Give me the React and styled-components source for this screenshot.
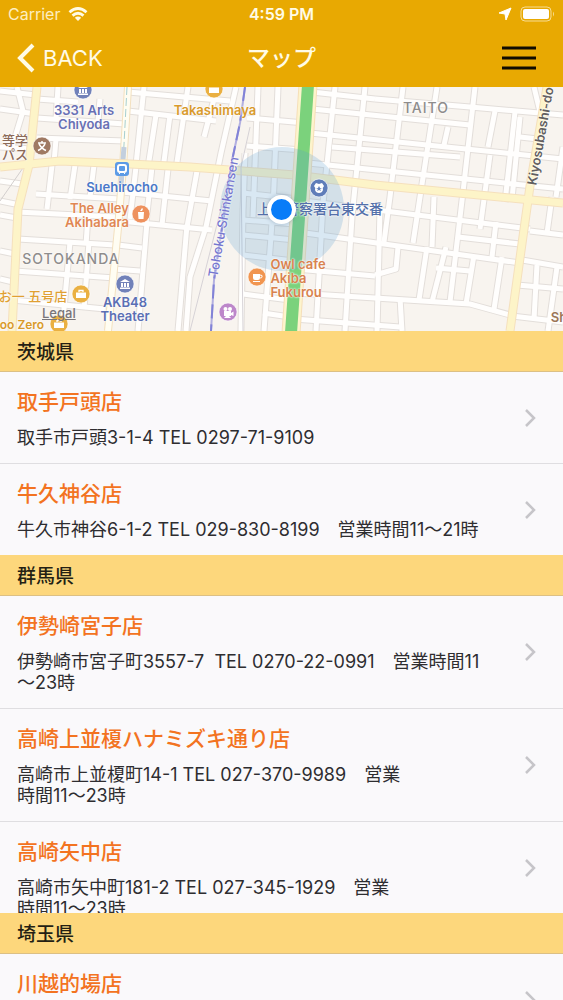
import React from 'react'
import styled, { createGlobalStyle } from 'styled-components'

const GlobalStyle = createGlobalStyle`
  * {
    box-sizing: border-box;
  }

  body {
    margin: 0;
    background: #faf9fb;
    font-family: Inter, "Noto Sans CJK JP", sans-serif;
    color: #2e2d30;
  }
`

const Screen = styled.div`
  height: 100vh;
  overflow: hidden;
  display: flex;
  flex-direction: column;
`

const TopBar = styled.header`
  flex: none;
  background: #e8a902;
  color: #fffbe6;
`

const StatusBar = styled.div`
  display: grid;
  grid-template-columns: 1fr auto 1fr;
  align-items: center;
  height: 28px;
  padding: 0 8px;
  font-size: 16px;
  line-height: 20px;
`

const Carrier = styled.div`
  display: flex;
  align-items: center;
  gap: 8px;
  color: #fdeec0;
`

const Clock = styled.div`
  font-weight: 600;
`

const StatusIcons = styled.div`
  display: flex;
  justify-content: flex-end;
  align-items: center;
  gap: 8px;
`

const NavBar = styled.nav`
  display: grid;
  grid-template-columns: 1fr auto 1fr;
  align-items: center;
  height: 59px;
  padding: 0 26px 0 16px;
`

const NavButton = styled.button`
  display: flex;
  align-items: center;
  gap: 8px;
  justify-self: ${props => props.$end ? 'end' : 'start'};
  padding: 0;
  border: 0;
  background: none;
  color: inherit;
  font: inherit;
  font-size: 22px;
  line-height: 28px;
`

const PageTitle = styled.h1`
  margin: 0;
  padding-left: 10px;
  font-size: 23px;
  line-height: 28px;
  font-weight: 500;
`

const MapArea = styled.section`
  flex: none;
  position: relative;
  height: 244px;
  overflow: hidden;
  background: #f8f4ef;
`

const MapCanvas = styled.svg`
  display: block;
  width: 100%;
  height: 100%;
`

const MapLabel = styled.span`
  position: absolute;
  left: ${props => props.$x}px;
  top: ${props => props.$y}px;
  transform: translate(-50%, -50%) rotate(${props => props.$turn || 0}deg);
  color: ${props => props.$color};
  font-size: ${props => props.$size || 13}px;
  line-height: 14px;
  font-weight: ${props => props.$weight || 600};
  letter-spacing: ${props => props.$spaced ? '1px' : 'normal'};
  text-align: ${props => props.$align || 'center'};
  white-space: pre;
  text-shadow: 0 0 2px #fff, 0 0 2px #fff;
`

const LegalLink = styled.a`
  position: absolute;
  left: 42px;
  top: 218px;
  color: #78757a;
  font-size: 13px;
  line-height: 16px;
  font-weight: 500;
`

const CurrentLocation = styled.span`
  position: absolute;
  left: 267px;
  top: 108px;
  width: 29px;
  height: 29px;
  border: 4px solid #fff;
  border-radius: 50%;
  background: #087cf8;
  box-shadow: 0 0 4px rgba(60, 90, 120, .35);
`

const StoreList = styled.main`
  flex: 1;
  min-height: 0;
  overflow: hidden;
`

const Prefecture = styled.h2`
  height: 41px;
  margin: 0;
  padding: 0 17px;
  border-bottom: 1px solid #dcc084;
  background: #fdd77c;
  color: #241f14;
  font-size: 19px;
  line-height: 43px;
  font-weight: 500;
`

const Stores = styled.ul`
  margin: 0;
  padding: 0;
  list-style: none;
`

const StoreItem = styled.li`
  border-bottom: 1px solid #dfdee1;

  &:last-child {
    border-bottom: 0;
  }
`

const StoreLink = styled.a`
  display: flex;
  align-items: center;
  justify-content: space-between;
  height: ${props => props.$short ? '91px' : 'auto'};
  overflow: hidden;
  padding: 0 27px 0 17px;
  color: inherit;
  text-decoration: none;
`

const StoreText = styled.div`
  align-self: flex-start;
  padding: 17px 0 15px;
`

const StoreName = styled.h3`
  margin: 0 0 12px;
  color: #f37321;
  font-size: 21px;
  line-height: 26px;
  font-weight: 500;
`

const StoreInfo = styled.p`
  margin: 0;
  font-size: 18px;
  line-height: 21px;
  white-space: pre;
`

const sections = [
  {
    name: '茨城県',
    stores: [
      { name: '取手戸頭店', info: '取手市戸頭3-1-4 TEL 0297-71-9109' },
      { name: '牛久神谷店', info: '牛久市神谷6-1-2 TEL 029-830-8199　営業時間11〜21時' }
    ]
  },
  {
    name: '群馬県',
    stores: [
      { name: '伊勢崎宮子店', info: '伊勢崎市宮子町3557-7  TEL 0270-22-0991　営業時間11\n〜23時' },
      { name: '高崎上並榎ハナミズキ通り店', info: '高崎市上並榎町14-1 TEL 027-370-9989　営業\n時間11〜23時' },
      { name: '高崎矢中店', info: '高崎市矢中町181-2 TEL 027-345-1929　営業\n時間11〜23時', short: true }
    ]
  },
  {
    name: '埼玉県',
    stores: [
      { name: '川越的場店', info: '川越市的場' }
    ]
  }
]

// side streets, drawn as a grey outline with white on top
const streets = [
  // west
  'M0 22L36 27', 'M17 0L23 24L12 60', 'M0 4L36 8', 'M37 31L125 37', 'M37 51L125 54', 'M0 60L32 62',
  'M58 0L56 32', 'M100 12L98 34', 'M37 12L78 15', 'M56 52L54 76',
  'M52 78L47 122', 'M75 78L70 112', 'M94 78L90 110', 'M36 107L120 112', 'M0 94L22 97', 'M0 114L20 118',
  'M17 125L118 130', 'M18 152L115 158', 'M15 184L115 191', 'M12 213L105 222',
  'M70 155L62 244', 'M89 155L84 222', 'M88 128L86 158', 'M0 164L15 167', 'M0 192L13 195', 'M0 128L17 131',
  // between the station and the railway
  'M128 24L216 34', 'M144 0L136 78', 'M156 28L148 80', 'M170 28L163 82', 'M188 0L176 82',
  'M214 12L204 50', 'M128 5L230 14', 'M136 80L130 132', 'M152 80L146 136', 'M168 82L162 138',
  'M122 105L212 114', 'M120 134L212 143', 'M118 158L142 161', 'M113 182L140 184', 'M147 135L138 244',
  'M187 138L178 244', 'M197 84L187 140',
  'M236 0L221 66L206 140L190 190L186 244', 'M245 66L243 124L241 244',
  // either side of the avenue
  'M258 0L253 130', 'M278 0L273 122L264 244', 'M247 31L305 36', 'M247 59L303 63',
  'M243 106L298 112', 'M243 133L295 137', 'M243 148L295 153', 'M243 168L294 174', 'M243 207L290 213',
  'M263 226L290 230', 'M335 0L323 116L316 244', 'M365 0L352 130L345 244',
  'M312 5L375 12', 'M312 22L470 38', 'M310 46L563 72', 'M332 60L460 70',
  'M308 76L563 102', 'M304 114L530 142', 'M298 145L520 176',
  'M296 182L375 189', 'M296 206L375 211L470 217L510 228', 'M294 232L400 240',
  // east
  'M375 12L470 20L563 28', 'M403 0L390 110L384 155', 'M437 0L420 110L413 156', 'M475 0L463 105L450 215',
  'M495 24L488 60', 'M515 25L505 115', 'M534 0L540 25', 'M448 40L444 58',
  'M490 68L480 142', 'M520 30L512 112', 'M446 160L432 215',
  'M520 50L538 52', 'M563 60L556 110', 'M427 160L419 213', 'M474 168L466 217', 'M502 170L494 222',
  'M436 181L470 184', 'M458 150L520 157', 'M496 135L492 170', 'M434 110L432 160',
  'M400 211L402 244', 'M398 160L396 182L375 188', 'M530 144L563 148', 'M522 173L563 180',
  'M517 198L563 202', 'M512 229L563 235', 'M552 110L547 146', 'M537 178L534 232', 'M557 180L548 244',
  'M380 122L377 244'
]

const avenues = [
  'M37 0L29 78L18 122L12 244',
  'M0 80L60 74L130 77L190 80L295 88L375 98L563 116',
  'M547 0L530 99L520 171L510 244'
]

const pins = [
  { x: 83, y: 3, color: '#7181b9', icon: 'bank' },
  { x: 42, y: 59, color: '#9f7963', icon: 'school' },
  { x: 214, y: 2, color: '#eab042', icon: 'bag' },
  { x: 141, y: 127, color: '#ee925f', icon: 'cup' },
  { x: 319, y: 101, color: '#5f7db9', icon: 'badge' },
  { x: 257, y: 190, color: '#f19550', icon: 'mug' },
  { x: 125, y: 197, color: '#7181b9', icon: 'bank' },
  { x: 81, y: 207, color: '#eab042', icon: 'bag' },
  { x: 59, y: 237, color: '#eab042', icon: 'bag' },
  { x: 228, y: 225, color: '#bd87ca', icon: 'film' }
]

const renderPinIcon = (icon) => {
  switch (icon) {
    case 'bank':
      return <path d='M-5-2L0-5L5-2ZM-4-1h2v4h-2zM-1-1h2v4h-2zM2-1h2v4h-2zM-5 3.5h10v1.5h-10z' fill='#fff' />
    case 'school':
      return <path d='M-4-3H4M0-5V-3M-3-2Q0 3 4 4.500M3-2Q0 3-4 4.500' stroke='#fff' strokeWidth='1.500' fill='none' />
    case 'bag':
      return (
        <g>
          <path d='M-5-1.500H5V4H-5Z' fill='#fff' />
          <path d='M-2-2V-3.500H2V-2' fill='none' stroke='#fff' strokeWidth='1.300' />
        </g>
      )
    case 'cup':
      return <path d='M-3-2H3L2.500 5H-2.500ZM-1-3L1-6L2-5L1-3Z' fill='#fff' />
    case 'mug':
      return (
        <g>
          <path d='M-4-3H3V1Q3 3 1 3H-2Q-4 3-4 1ZM-4 4H3V5H-4Z' fill='#fff' />
          <path d='M3-2Q6-2 5 0Q5 1 3 1' fill='none' stroke='#fff' />
        </g>
      )
    case 'badge':
      return (
        <g>
          <path d='M-3-5L0-4L3-5L5-2Q3 0 4 2Q3 5 0 5Q-3 5-4 2Q-3 0-5-2Z' fill='#fff' />
          <path d='M0-2L1 0L3 0L1 1L2 3L0 2L-2 3L-1 1L-3 0L-1 0Z' fill='#5f7db9' />
        </g>
      )
    default:
      return (
        <g fill='#fff'>
          <circle cx='-2.500' cy='-3' r='2' />
          <circle cx='2' cy='-3' r='2' />
          <path d='M-4-1H3V4H-4ZM3 1L5.500-.5V4L3 3ZM-2 4H1L3 6H-4Z' />
        </g>
      )
  }
}

const labels = [
  { text: '3331 Arts\nChiyoda', x: 84, y: 30, color: '#6870b4' },
  { text: 'Takashimaya', x: 215, y: 23, color: '#d99a2b' },
  { text: 'TAITO', x: 426, y: 21, color: '#8e8c8c', size: 14, weight: 500, spaced: true },
  { text: 'Kiyosubashi-do', x: 540, y: 49, color: '#625f5f', weight: 600, turn: -80 },
  { text: '等学\nパス', x: 15, y: 60, color: '#8c6a58', weight: 500, align: 'right' },
  { text: 'Suehirocho', x: 122, y: 100, color: '#4a78c8' },
  { text: 'The Alley\nAkihabara', x: 97, y: 128, color: '#e08753', align: 'right' },
  { text: '上野警察署台東交番', x: 320, y: 122, color: '#5470aa', size: 14, weight: 500 },
  { text: 'Tohoku Shinkansen', x: 223, y: 130, color: '#7677cf', weight: 500, turn: -80 },
  { text: 'SOTOKANDA', x: 71, y: 172, color: '#8e8c8c', size: 14, weight: 500, spaced: true },
  { text: 'Owl cafe\nAkiba\nFukurou', x: 298, y: 191, color: '#d8824e', align: 'left' },
  { text: 'AKB48\nTheater', x: 125, y: 222, color: '#5b6fb4' },
  { text: 'お一 五号店', x: 33, y: 209, color: '#e0a032', weight: 500 },
  { text: 'oo Zero', x: 22, y: 238, color: '#d99a2b', size: 12 },
  { text: 'Sh', x: 559, y: 230, color: '#9b7556' }
]

const AreaMap = () => (
  <MapArea aria-label='マップ'>
    <MapCanvas viewBox='0 0 563 244' preserveAspectRatio='xMinYMid slice' aria-hidden='true'>
      <g fill='none' strokeLinejoin='round'>
        <g stroke='#e3deda' strokeWidth='7'>
          {streets.map((d) => <path key={d} d={d} />)}
        </g>
        <g stroke='#fffefd' strokeWidth='5'>
          {streets.map((d) => <path key={d} d={d} />)}
        </g>
        <path d='M25 78L0 114' stroke='#d2cecd' />
        <path d='M128 0L123 80L118 141L108 244' stroke='#f3e0bf' strokeWidth='8' />
        <path d='M128 0L123 80L118 141L108 244' stroke='#fffdf2' strokeWidth='6' />
        <path d='M127 0L122 96' stroke='#a7cfd0' strokeWidth='1' strokeDasharray='8 3' />
        <path d='M124 60L121 98' stroke='#c3cfde' strokeWidth='5' />
        <g stroke='#f5e0bd' strokeWidth='9'>
          {avenues.map((d) => <path key={d} d={d} />)}
        </g>
        <g stroke='#fdf4c8' strokeWidth='7'>
          {avenues.map((d) => <path key={d} d={d} />)}
        </g>
        <path d='M308 -2L300 116L291 246' stroke='#f6dfb8' strokeWidth='19' />
        <path d='M308 -2L300 116L291 246' stroke='#fdf4cc' strokeWidth='17' />
        <path d='M308 -2L300 116L291 246' stroke='#7bd27c' strokeWidth='12' />
        <path d='M239 40L229 90L190 244M250 40L241 80L243 244' stroke='#d6d2d6' />
        <path d='M245 0L240 36L233 69L214 193L211 244' stroke='#b2afe0' strokeWidth='2' />
        <path d='M245 0L240 36L233 69L214 193L211 244' stroke='#8283d7' strokeWidth='2' strokeDasharray='14 6' />
      </g>
      <circle cx='282' cy='122' r='62' fill='#549bd0' fillOpacity='.22' />
      <rect x='115' y='75' width='14' height='14' rx='3' fill='#5c9be6' />
      <rect x='118' y='78' width='8' height='7' rx='2' fill='none' stroke='#fff' strokeWidth='2' />
      <path d='M119 87L121 85M125 87L123 85' stroke='#fff' />
      {pins.map((pin) => (
        <g key={`${pin.x}-${pin.y}`} transform={`translate(${pin.x} ${pin.y})`}>
          <circle r='9' fill={pin.color} stroke='#fff' strokeOpacity='.6' />
          {renderPinIcon(pin.icon)}
        </g>
      ))}
    </MapCanvas>
    {labels.map((label) => (
      <MapLabel
        key={label.text}
        $x={label.x}
        $y={label.y}
        $color={label.color}
        $size={label.size}
        $weight={label.weight}
        $turn={label.turn}
        $spaced={label.spaced}
        $align={label.align}
      >
        {label.text}
      </MapLabel>
    ))}
    <LegalLink href='#legal'>Legal</LegalLink>
    <CurrentLocation />
  </MapArea>
)

const Chevron = () => (
  <svg width='12' height='20' viewBox='0 0 12 20' fill='none' stroke='#c6c5c9' strokeWidth='2.500' aria-hidden='true'>
    <path d='M2 2L10 10L2 18' />
  </svg>
)

const App = () => (
  <Screen>
    <GlobalStyle />
    <TopBar>
      <StatusBar>
        <Carrier>
          Carrier
          <svg width='20' height='15' viewBox='0 0 20 15' fill='none' stroke='#fffbe6' strokeWidth='2.800' aria-hidden='true'>
            <path d='M1.500 5.200Q10-2.200 18.500 5.200M4.500 8.600Q10 3.800 15.500 8.600' />
            <path d='M10 14L6.800 10.800Q10 8.200 13.200 10.800Z' fill='#fffbe6' stroke='none' />
          </svg>
        </Carrier>
        <Clock>4:59 PM</Clock>
        <StatusIcons>
          <svg width='14' height='14' viewBox='0 0 14 14' aria-hidden='true'>
            <path d='M13 1L8 13L7 7L1 6Z' fill='#fff' stroke='#fff' strokeLinejoin='round' />
          </svg>
          <svg width='35' height='16' viewBox='0 0 35 16' aria-hidden='true'>
            <rect x='1' y='1' width='30' height='14' rx='4' fill='none' stroke='#f7dc92' />
            <rect x='3' y='3' width='26' height='10' rx='2' fill='#fff' />
            <path d='M33 5.500Q35 8 33 10.500Z' fill='#f7dc92' />
          </svg>
        </StatusIcons>
      </StatusBar>
      <NavBar>
        <NavButton type='button'>
          <svg width='19' height='30' viewBox='0 0 19 30' fill='none' stroke='#fffbe6' strokeWidth='4' aria-hidden='true'>
            <path d='M17 2L4 15L17 28' />
          </svg>
          BACK
        </NavButton>
        <PageTitle>マップ</PageTitle>
        <NavButton type='button' $end aria-label='メニュー'>
          <svg width='36' height='26' viewBox='0 0 36 26' stroke='#100c02' strokeWidth='3' aria-hidden='true'>
            <path d='M1 3H35M1 13H35M1 23H35' />
          </svg>
        </NavButton>
      </NavBar>
    </TopBar>
    <AreaMap />
    <StoreList>
      {sections.map((section) => (
        <section key={section.name}>
          <Prefecture>{section.name}</Prefecture>
          <Stores>
            {section.stores.map((store) => (
              <StoreItem key={store.name}>
                <StoreLink href='#store' $short={store.short}>
                  <StoreText>
                    <StoreName>{store.name}</StoreName>
                    <StoreInfo>{store.info}</StoreInfo>
                  </StoreText>
                  <Chevron />
                </StoreLink>
              </StoreItem>
            ))}
          </Stores>
        </section>
      ))}
    </StoreList>
  </Screen>
)

export default App
